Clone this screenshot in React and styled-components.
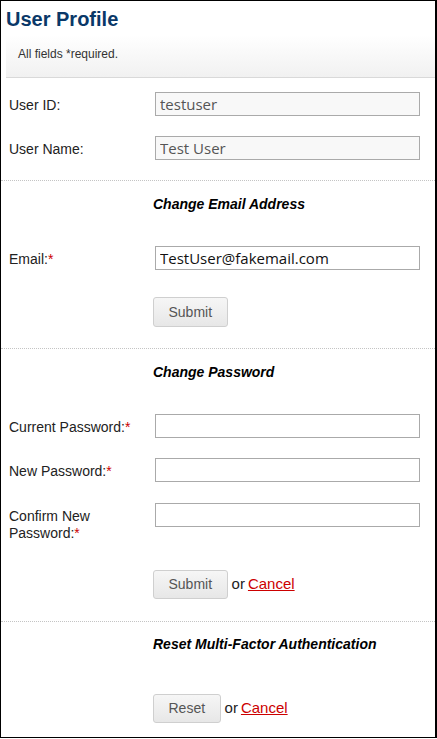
import React from "react";
import styled, { createGlobalStyle } from "styled-components";

const GlobalStyle = createGlobalStyle`
  html, body { margin: 0; padding: 0; background: #fff; }
  body { font-family: "Liberation Sans", Arial, sans-serif; }
  * { box-sizing: border-box; }
`;

const Frame = styled.div`
  width: 437px;
  height: 738px;
  border: 1px solid #000;
  border-right-width: 2px;
  background: #fff;
  overflow: hidden;
`;

const Title = styled.h1`
  margin: 7px 0 0 5px;
  font: bold 20px/23px "Liberation Sans", Arial, sans-serif;
  color: #0a3868;
`;

const Notice = styled.div`
  margin: 4px 0 0 5px;
  padding: 12px 12px 16px;
  background: linear-gradient(to bottom, #ffffff 0%, #f1f1f1 100%);
  border-bottom: 1px solid #d9d9d9;
  font: 12px/14px "Liberation Sans", Arial, sans-serif;
  color: #333;
`;

const Section = styled.section`
  display: flex;
  flex-direction: column;
  padding: ${(p) => p.$pt}px 0 ${(p) => p.$pb}px 8px;
  border-top: ${(p) => (p.$divided ? "1px dotted #c4c4c4" : "none")};
`;

const Row = styled.div`
  display: grid;
  grid-template-columns: 144px 1fr;
  align-items: start;
  margin-top: ${(p) => p.$mt || 0}px;
`;

const Label = styled.label`
  padding-top: 5px;
  font: 14px/17px "Liberation Sans", Arial, sans-serif;
  color: #222;
`;

const Req = styled.span`
  color: #cc0000;
`;

const Input = styled.input`
  margin-left: 2px;
  width: 265px;
  height: 24px;
  padding: 0 4px;
  border: 1px solid #aaa;
  border-radius: 0;
  background: ${(p) => (p.readOnly ? "#f8f8f8" : "#fff")};
  color: ${(p) => (p.readOnly ? "#555" : "#111")};
  font: 15px "Open Sans", "Segoe UI", sans-serif;
  outline: none;
`;

const Heading = styled.h2`
  grid-column: 2;
  margin: 0;
  font: italic bold 14px/16px "Liberation Sans", Arial, sans-serif;
  color: #000;
`;

const Actions = styled.div`
  grid-column: 2;
  display: flex;
  align-items: baseline;
  gap: 4px;
  font: 15px/17px "Liberation Sans", Arial, sans-serif;
  color: #222;
`;

const Button = styled.button`
  height: ${(p) => p.$h || 29}px;
  padding: 0 14.5px;
  border: 1px solid #cfcfcf;
  border-radius: 3px;
  background: linear-gradient(to bottom, #f6f6f6 0%, #e7e7e7 100%);
  font: 14px/27px "Liberation Sans", Arial, sans-serif;
  color: #555;
  cursor: pointer;
`;

const CancelLink = styled.a`
  color: #cc0000;
  text-decoration: underline;
  margin-left: -1px;
`;

export default function App() {
  return (
    <>
      <GlobalStyle />
      <Frame>
        <Title>User Profile</Title>
        <Notice>All fields *required.</Notice>

        <Section $pt={14} $pb={20}>
          <Row>
            <Label>User ID:</Label>
            <Input readOnly value="testuser" />
          </Row>
          <Row $mt={20}>
            <Label>User Name:</Label>
            <Input readOnly value="Test User" />
          </Row>
        </Section>

        <Section $divided $pt={15} $pb={21}>
          <Row>
            <Heading>Change Email Address</Heading>
          </Row>
          <Row $mt={34}>
            <Label>
              Email:<Req>*</Req>
            </Label>
            <Input defaultValue="TestUser@fakemail.com" />
          </Row>
          <Row $mt={27}>
            <Actions>
              <Button $h={30}>Submit</Button>
            </Actions>
          </Row>
        </Section>

        <Section $divided $pt={15} $pb={22}>
          <Row>
            <Heading>Change Password</Heading>
          </Row>
          <Row $mt={34}>
            <Label>
              Current Password:<Req>*</Req>
            </Label>
            <Input type="password" />
          </Row>
          <Row $mt={20}>
            <Label>
              New Password:<Req>*</Req>
            </Label>
            <Input type="password" />
          </Row>
          <Row $mt={21}>
            <Label>
              Confirm New
              <br />
              Password:<Req>*</Req>
            </Label>
            <Input type="password" />
          </Row>
          <Row $mt={28}>
            <Actions>
              <Button>Submit</Button>
              <span>or</span>
              <CancelLink href="#">Cancel</CancelLink>
            </Actions>
          </Row>
        </Section>

        <Section $divided $pt={14} $pb={14}>
          <Row>
            <Heading>Reset Multi-Factor Authentication</Heading>
          </Row>
          <Row $mt={42}>
            <Actions>
              <Button>Reset</Button>
              <span>or</span>
              <CancelLink href="#">Cancel</CancelLink>
            </Actions>
          </Row>
        </Section>
      </Frame>
    </>
  );
}
